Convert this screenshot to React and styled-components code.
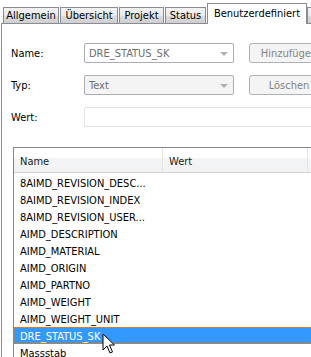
import React from "react";
import styled, { createGlobalStyle, css } from "styled-components";

const Global = createGlobalStyle`
  html, body { margin: 0; padding: 0; background: #ffffff; }
  #root { width: 311px; height: 357px; overflow: hidden; }
`;

const Window = styled.div`
  position: relative;
  width: 311px;
  height: 357px;
  overflow: hidden;
  background: #ffffff;
  font-family: "DejaVu Sans Condensed", "DejaVu Sans", sans-serif;
  font-stretch: condensed;
  font-size: 11px;
  color: #000;
`;

const TabStrip = styled.div`
  display: flex;
  align-items: flex-end;
  height: 23px;
  padding-left: 3px;
  position: relative;
  z-index: 1;
`;

const Tab = styled.div`
  box-sizing: border-box;
  width: ${(p) => p.$w}px;
  height: 16px;
  flex: none;
  margin-right: 1px;
  border: 1px solid #898c95;
  border-bottom: none;
  background: linear-gradient(#f2f2f2, #ebebeb 50%, #dddddd 51%, #cfcfcf);
  display: flex;
  align-items: center;
  justify-content: center;
  white-space: nowrap;
  overflow: hidden;
  ${(p) =>
    p.$active &&
    css`
      height: 21px;
      margin-bottom: -1px;
      margin-right: 0;
      background: #ffffff;
      padding-bottom: 2px;
    `}
  ${(p) =>
    p.$cut &&
    css`
      justify-content: flex-start;
      padding-left: 3px;
    `}
`;

const Panel = styled.div`
  border-top: 1px solid #898c95;
  border-left: 1px solid #898c95;
  margin-left: 1px;
  height: 340px;
  padding: 19px 0 0 9px;
  box-sizing: border-box;
`;

const Form = styled.div`
  display: grid;
  grid-template-columns: 73px 150px 80px;
  grid-auto-rows: 20px;
  row-gap: 12px;
  align-items: center;
`;

const Label = styled.div`
  color: #000;
`;

const Combo = styled.div`
  box-sizing: border-box;
  height: 20px;
  border: 1px solid #abadb3;
  border-radius: 2px;
  background: ${(p) => (p.$disabled ? "#f4f4f4" : "#ffffff")};
  color: #6d6d6d;
  display: flex;
  align-items: center;
  justify-content: space-between;
  padding: 0 5px 0 4px;
`;

const Arrow = styled.span`
  width: 0;
  height: 0;
  border-left: 4px solid transparent;
  border-right: 4px solid transparent;
  border-top: 4px solid #b0b0b0;
  margin-top: 1px;
`;

const Button = styled.div`
  box-sizing: border-box;
  margin-left: 15px;
  width: 80px;
  height: 20px;
  border: 1px solid #adb2b5;
  border-radius: 3px;
  background: #f4f4f4;
  color: #838383;
  display: flex;
  align-items: center;
  justify-content: center;
  white-space: nowrap;
`;

const ValueInput = styled.div`
  grid-column: 2 / span 2;
  box-sizing: border-box;
  width: 260px;
  height: 20px;
  margin-top: -1px;
  border: 1px solid #e0e3e8;
  border-radius: 2px;
  background: #ffffff;
`;

const List = styled.div`
  margin-top: 20px;
  margin-left: 2px;
  width: 320px;
  border: 1px solid #828790;
  border-right: none;
  height: 240px;
  box-sizing: border-box;
`;

const Header = styled.div`
  display: flex;
  height: 25px;
  box-sizing: border-box;
  border-bottom: 1px solid #d5d5d5;
  background: linear-gradient(#ffffff, #ffffff 40%, #f4f5f6 41%, #f1f2f4);
`;

const HeaderCell = styled.div`
  box-sizing: border-box;
  width: ${(p) => p.$w}px;
  flex: none;
  border-right: 1px solid #e3e4e6;
  padding: 2px 0 0 6px;
  display: flex;
  align-items: center;
  color: #1b1b1b;
`;

const Rows = styled.div`
  padding-top: 1px;
`;

const Row = styled.div`
  box-sizing: border-box;
  height: 17px;
  padding: 1px 0 0 6px;
  display: flex;
  align-items: center;
  white-space: nowrap;
  ${(p) =>
    p.$selected &&
    css`
      background: #3399ff;
      color: #ffffff;
      outline: 1px dotted #d9822b;
      outline-offset: -1px;
    `}
`;

const Cursor = styled.svg`
  position: absolute;
  left: 102px;
  top: 333px;
`;

const tabs = [
  { label: "Allgemein", w: 56 },
  { label: "Übersicht", w: 58 },
  { label: "Projekt", w: 45 },
  { label: "Status", w: 41 },
  { label: "Benutzerdefiniert", w: 100, active: true },
  { label: "S", w: 20, cut: true },
];

const rows = [
  "8AIMD_REVISION_DESC...",
  "8AIMD_REVISION_INDEX",
  "8AIMD_REVISION_USER...",
  "AIMD_DESCRIPTION",
  "AIMD_MATERIAL",
  "AIMD_ORIGIN",
  "AIMD_PARTNO",
  "AIMD_WEIGHT",
  "AIMD_WEIGHT_UNIT",
  "DRE_STATUS_SK",
  "Massstab",
];

export default function App() {
  return (
    <Window>
      <Global />
      <TabStrip>
        {tabs.map((t) => (
          <Tab key={t.label} $w={t.w} $active={t.active} $cut={t.cut}>
            {t.label}
          </Tab>
        ))}
      </TabStrip>
      <Panel>
        <Form>
          <Label>Name:</Label>
          <Combo>
            <span>DRE_STATUS_SK</span>
            <Arrow />
          </Combo>
          <Button>Hinzufügen</Button>
          <Label>Typ:</Label>
          <Combo $disabled>
            <span>Text</span>
            <Arrow />
          </Combo>
          <Button>Löschen</Button>
          <Label>Wert:</Label>
          <ValueInput />
        </Form>
        <List>
          <Header>
            <HeaderCell $w={149}>Name</HeaderCell>
            <HeaderCell $w={145}>Wert</HeaderCell>
          </Header>
          <Rows>
            {rows.map((r) => (
              <Row key={r} $selected={r === "DRE_STATUS_SK"}>
                {r}
              </Row>
            ))}
          </Rows>
        </List>
      </Panel>
      <Cursor width="14" height="22" viewBox="0 0 14 22">
        <path
          d="M1 1 L1 17 L5 13 L8 20 L10.5 19 L7.5 12 L12.5 12 Z"
          fill="#ffffff"
          stroke="#000000"
          strokeWidth="1"
          strokeLinejoin="miter"
        />
      </Cursor>
    </Window>
  );
}
